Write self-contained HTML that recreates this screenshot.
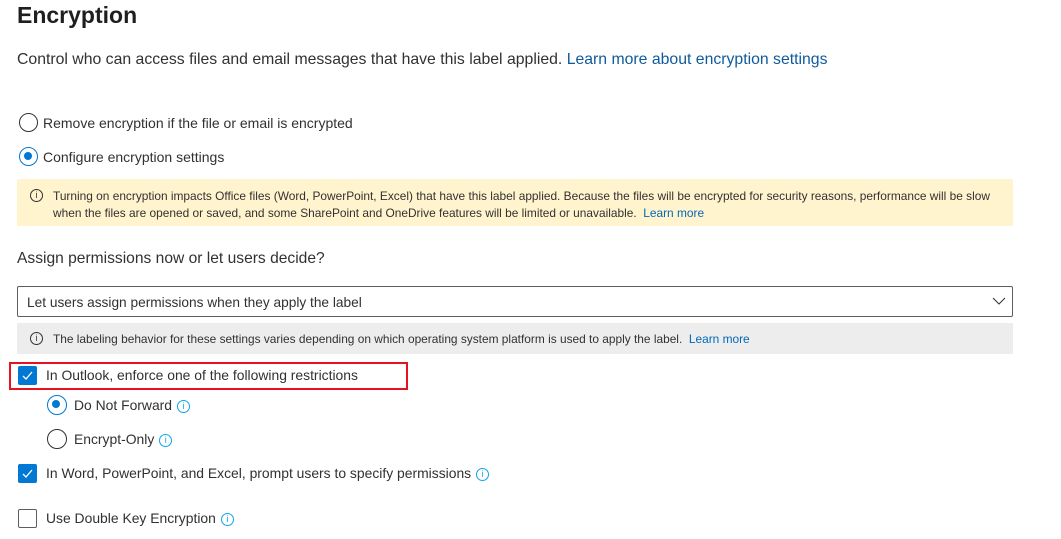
<!DOCTYPE html>
<html><head><style>
body{margin:0;width:1061px;height:539px;overflow:hidden;background:#fff;font-family:"Liberation Sans",sans-serif;color:#323130;position:relative}
.a{position:absolute;white-space:nowrap}
.rad{position:absolute;width:18px;height:18px;border:1px solid #323130;border-radius:50%;box-sizing:border-box}
.rad.on{border-color:#0078d4}
.rad.on::after{content:"";position:absolute;left:4px;top:4px;width:8px;height:8px;border-radius:50%;background:#0078d4}
.cb{position:absolute;width:19px;height:19px;box-sizing:border-box;border-radius:2px}
.cb.on{background:#0078d4}
.cb.off{border:1px solid #605e5c}
.i{position:absolute;width:13px;height:13px;border:1px solid #0ea5e9;border-radius:50%;box-sizing:border-box;color:#0ea5e9;font-size:9px;line-height:11px;text-align:center}
.ii{display:inline-block;vertical-align:1px;margin-left:5px;width:13px;height:13px;border:1px solid #0ea5e9;border-radius:50%;box-sizing:border-box;color:#0ea5e9;font-size:9px;line-height:11px;text-align:center}
.ig{border-color:#323130;color:#323130}
a{color:#0f5a9c;text-decoration:none}
</style></head><body>
<div class="a" style="left:17px;top:2px;font-size:23px;font-weight:bold;color:#201f1e">Encryption</div>
<div class="a" style="left:17px;top:51px;font-size:15.8px">Control who can access files and email messages that have this label applied. <a>Learn more about encryption settings</a></div>
<div class="rad" style="left:19px;top:113px;width:19px;height:19px"></div>
<div class="a" style="left:43px;top:115px;font-size:14px">Remove encryption if the file or email is encrypted</div>
<div class="rad on" style="left:19px;top:147px;width:19px;height:19px"></div>
<div class="a" style="left:43px;top:149px;font-size:14px">Configure encryption settings</div>
<div class="a" style="left:17px;top:179px;width:996px;height:47px;background:#fff4ce"></div>
<div class="i ig" style="left:30px;top:189px">i</div>
<div class="a" style="left:53px;top:188px;font-size:11.9px;line-height:17px">Turning on encryption impacts Office files (Word, PowerPoint, Excel) that have this label applied. Because the files will be encrypted for security reasons, performance will be slow<br>when the files are opened or saved, and some SharePoint and OneDrive features will be limited or unavailable. &nbsp;<a style="color:#0067b8">Learn more</a></div>
<div class="a" style="left:17px;top:250px;font-size:15.6px">Assign permissions now or let users decide?</div>
<div class="a" style="left:17px;top:286px;width:996px;height:31px;border:1px solid #605e5c;box-sizing:border-box;border-radius:2px"></div>
<div class="a" style="left:27px;top:295px;font-size:13.7px">Let users assign permissions when they apply the label</div>
<svg class="a" style="left:992px;top:296px" width="14" height="10"><path d="M1 2l6 6 6-6" fill="none" stroke="#323130" stroke-width="1"/></svg>
<div class="a" style="left:17px;top:323px;width:996px;height:31px;background:#ededed"></div>
<div class="i ig" style="left:30px;top:332px">i</div>
<div class="a" style="left:53px;top:332px;font-size:11.9px">The labeling behavior for these settings varies depending on which operating system platform is used to apply the label. &nbsp;<a style="color:#0067b8">Learn more</a></div>
<div class="a" style="left:9px;top:362px;width:399px;height:28px;border:2px solid #e81123;box-sizing:border-box"></div>
<div class="cb on" style="left:18px;top:366px"><svg width="19" height="19"><path d="M5 10l3 3 6-7" fill="none" stroke="#fff" stroke-width="1.3"/></svg></div>
<div class="a" style="left:46px;top:367px;font-size:13.9px">In Outlook, enforce one of the following restrictions</div>
<div class="rad on" style="left:47px;top:395px;width:20px;height:20px"></div>
<div class="a" style="left:74px;top:397px;font-size:13.9px">Do Not Forward<span class="ii">i</span></div>
<div class="rad" style="left:47px;top:429px;width:20px;height:20px"></div>
<div class="a" style="left:74px;top:431px;font-size:13.9px">Encrypt-Only<span class="ii">i</span></div>
<div class="cb on" style="left:18px;top:464px"><svg width="19" height="19"><path d="M5 10l3 3 6-7" fill="none" stroke="#fff" stroke-width="1.3"/></svg></div>
<div class="a" style="left:46px;top:465px;font-size:13.9px">In Word, PowerPoint, and Excel, prompt users to specify permissions<span class="ii">i</span></div>
<div class="cb off" style="left:18px;top:509px"></div>
<div class="a" style="left:46px;top:510px;font-size:13.9px">Use Double Key Encryption<span class="ii">i</span></div>
</body></html>
